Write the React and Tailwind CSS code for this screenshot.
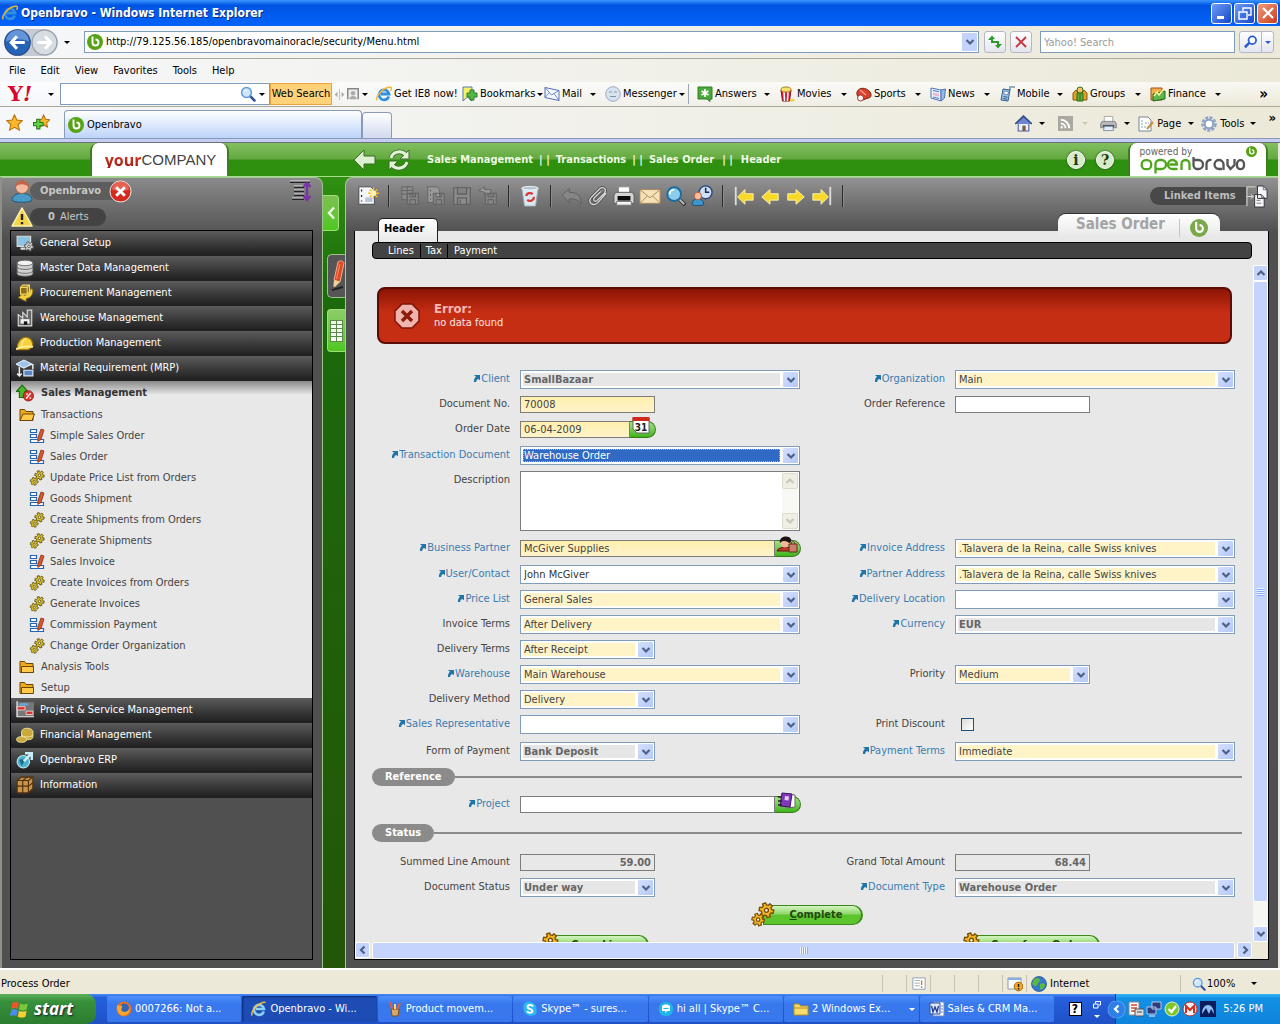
import { clsx } from 'clsx';

/* ---------- small shared pieces ---------- */

function Icon({ size = 16, box = 16, children, className }) {
  return (
    <svg width={size} height={size} viewBox={`0 0 ${box} ${box}`} className={clsx("shrink-0", className)} aria-hidden="true">
      {children}
    </svg>
  );
}

function Caret({ className }) {
  return (
    <svg width="6" height="3" viewBox="0 0 6 3" className={clsx("shrink-0", className)} aria-hidden="true">
      <path d="M0 0h6L3 3z" fill="currentColor" />
    </svg>
  );
}

function Chevron({ dir = 'down', className = 'text-[#4d6185]' }) {
  const paths = {
    down: 'M1.5 3l3.5 3.5L8.5 3',
    up: 'M1.5 7L5 3.500L8.5 7',
    left: 'M6.500 1.5L3 5l3.500 3.500',
    right: 'M3.500 1.5L7 5l-3.500 3.500',
  };
  return (
    <svg width="10" height="10" viewBox="0 0 10 10" className={className} aria-hidden="true">
      <path d={paths[dir]} fill="none" stroke="currentColor" strokeWidth="2.2" />
    </svg>
  );
}

const BravoIcon = ({ size = 16, color = '#57a314' }) => (
  <Icon size={size}>
    <circle cx="8" cy="8" r="8" fill={color} />
    <path d="M5.500 2.500V8.500a3 3 0 1 0 3-3" fill="none" stroke="#fff" strokeWidth="1.900" />
  </Icon>
);

const IeIcon = ({ size = 16 }) => (
  <Icon size={size}>
    <path d="M12.800 10.500A5 5 0 1 1 13 8H5" fill="none" stroke="#2f8fe0" strokeWidth="2.800" />
    <path d="M1.200 14.500C-1 11 7 1 14.500 1.200c1.500.5.8 2.500 0 3.500" fill="none" stroke="#f2b632" strokeWidth="1.400" />
  </Icon>
);

const Magnifier = ({ size = 16 }) => (
  <Icon size={size}>
    <path d="M9.500 9.500l5 5" stroke="#3c4f9a" strokeWidth="2.500" strokeLinecap="round" />
    <circle cx="6.500" cy="6.500" r="4.900" fill="#cfe6fb" stroke="#5c9ae0" strokeWidth="1.500" />
    <path d="M4 6a3 3 0 0 1 2.500-2" stroke="#fff" fill="none" />
  </Icon>
);

const Envelope = () => (
  <Icon>
    <g fill="none" stroke="#5470b8">
      <path d="M1 1.500l14 3v10L1 11.500z" fill="#f4f8ff" />
      <path d="M1 1.500l6.500 7.500L15 4.500M1 11.500l4.500-5M15 14.500l-5-7" strokeWidth=".8" />
    </g>
  </Icon>
);

const Printer = ({ size = 18 }) => (
  <Icon size={size} box={24}>
    <path d="M6 10V2h12v8" fill="#fff" stroke="#8d8d8d" />
    <path d="M3 9h18l2 3v6H1v-6z" fill="#b9b9bd" stroke="#666" />
    <path d="M4 14h16v3H4z" fill="#555" />
    <path d="M6 16h12l1 6H5z" fill="#e4eefc" stroke="#5c7498" />
  </Icon>
);

/* outline of a gear wheel with six rounded teeth */
function gearPath(cx, cy, r) {
  const pts = [];
  for (let i = 0; i < 6; i++) {
    [[-0.3, 1], [-0.24, 1.4], [0.24, 1.4], [0.3, 1]].forEach(([da, k]) => {
      const a = (i * Math.PI) / 3 + da + 0.2;
      pts.push(`${(cx + Math.cos(a) * r * k).toFixed(2)} ${(cy + Math.sin(a) * r * k).toFixed(2)}`);
    });
  }
  return `M${pts.join('L')}z`;
}

const Gear = ({ cx, cy, r, fill, stroke }) => (
  <g stroke={stroke} strokeWidth={r * 0.25} strokeLinejoin="round">
    <path d={gearPath(cx, cy, r)} fill={fill} />
    <circle cx={cx} cy={cy} r={r * 0.38} fill="#f4f0dc" />
  </g>
);

const Gears = ({ size = 16, fill = '#d8c02c', stroke = '#5a4a08', className }) => (
  <Icon size={size} className={className}>
    <Gear cx={10.5} cy={5.3} r={3.4} fill={fill} stroke={stroke} />
    <Gear cx={5.2} cy={11.3} r={2.9} fill={fill} stroke={stroke} />
  </Icon>
);

const FormIcon = () => (
  <Icon>
    <g fill="#fff" stroke="#2464b4" strokeWidth="1.200">
      <path d="M1.500 1.500h6v3h-6zM1.500 6.500h6v3h-6zM1.500 11.500h13v3h-13z" />
    </g>
    <path d="M12 1l3 1-3 9.500-3.200 2v-3.500z" fill="#d9552c" stroke="#8c3216" strokeWidth=".8" />
  </Icon>
);

const Folder = ({ open }) => (
  <Icon>
    <path d="M1 13.500v-11h4.500l1.500 2h7v9z" fill="#f0a81c" stroke="#6b4706" />
    <path d={open ? 'M1 13.500l3-6.500h11.500l-2.500 6.500z' : 'M2.500 13.500V7.500h12v6z'} fill="#ffc94a" stroke="#6b4706" />
  </Icon>
);

/* ---------- browser chrome ---------- */

function TitleBar() {
  const box = "flex h-[21px] w-[21px] items-center justify-center rounded-[3px] border border-white";
  return (
    <header className="flex h-[26px] shrink-0 items-center bg-linear-to-b from-[#3a95ff] via-[#0054e3] via-20% to-[#0463fb] px-[2px]">
      <IeIcon />
      <h1 className="ml-[3px] flex-1 font-['DejaVu_Sans_Condensed','DejaVu_Sans',sans-serif] text-[12px] font-bold text-white [text-shadow:1px_1px_#0a2f8a]">Openbravo - Windows Internet Explorer</h1>
      <div className="flex gap-[2px]">
        <button aria-label="Minimize" className={clsx(box, "bg-linear-to-br from-[#6f9bf5] to-[#1546c8]")}>
          <Icon><path d="M3 11h7v3H3z" fill="#fff" /></Icon>
        </button>
        <button aria-label="Restore" className={clsx(box, "bg-linear-to-br from-[#6f9bf5] to-[#1546c8]")}>
          <Icon><path d="M6 6V3h8v7h-3M2 7h8v7H2z" fill="none" stroke="#fff" strokeWidth="1.400" /></Icon>
        </button>
        <button aria-label="Close" className={clsx(box, "bg-linear-to-br from-[#f09a7c] to-[#c93a12]")}>
          <Icon><path d="M3 3l10 10M13 3L3 13" stroke="#fff" strokeWidth="2.200" /></Icon>
        </button>
      </div>
    </header>
  );
}

function AddressBar() {
  const btn = "flex h-[22px] items-center justify-center rounded-[3px] border border-[#b5b8c4] bg-linear-to-b from-white to-[#e3e6ee]";
  return (
    <div className="flex h-[33px] shrink-0 items-center border-b border-[#aca899] bg-linear-to-r from-[#f6f7fa] to-[#ece9d8] pr-[6px] pl-[4px]">
      <div className="flex rounded-full bg-[#c6cad2]">
        <button aria-label="Back">
          <Icon size={27} box={26}>
            <circle cx="13" cy="13" r="12.300" fill="#2563b8" stroke="#274a80" />
            <path d="M2 12a11 11 0 0 1 22 0c-6-3-16-3-22 0z" fill="#8db8ec" opacity=".6" />
            <path d="M12.500 7L7 13l5.500 6M7.500 13H20" fill="none" stroke="#fff" strokeWidth="3" />
          </Icon>
        </button>
        <button aria-label="Forward">
          <Icon size={27} box={26}>
            <circle cx="13" cy="13" r="12" fill="#d7dbe2" stroke="#8d97a6" />
            <path d="M13.500 7l5.500 6-5.500 6M18.500 13H6" fill="none" stroke="#fff" strokeWidth="3" />
          </Icon>
        </button>
      </div>
      <Caret className="mx-[6px]" />
      <div className="ml-[8px] flex h-[22px] flex-1 items-center border border-[#7f9db9] bg-white pr-px pl-[2px]">
        <BravoIcon />
        <input aria-label="Address" className="ml-[3px] min-w-0 flex-1 outline-none" defaultValue="http://79.125.56.185/openbravomainoracle/security/Menu.html" />
        <button aria-label="Show addresses" className="flex h-[18px] w-[15px] items-center justify-center bg-[#c3d3fb]"><Chevron /></button>
      </div>
      <button aria-label="Refresh" className={clsx(btn, "ml-[5px] w-[22px]")}>
        <Icon><path d="M1 6l4-4.500L8 5H6v2h2v2H4V6zM15 10l-4 4.500L8 11h2V9H8V7h4v3z" fill="#2f9a2c" /></Icon>
      </button>
      <button aria-label="Stop" className={clsx(btn, "ml-[4px] w-[22px]")}>
        <Icon><path d="M3 3l10 10M13 3L3 13" stroke="#c8323c" strokeWidth="1.800" /></Icon>
      </button>
      <input aria-label="Search" placeholder="Yahoo! Search" className="ml-[8px] h-[22px] w-[195px] border border-[#7f9db9] bg-white px-[3px] placeholder:text-[#9a9a9a]" />
      <div className={clsx(btn, "ml-[4px] w-[35px]")}>
        <button aria-label="Search the web" className="flex flex-1 justify-center">
          <Icon size={14}><circle cx="9.500" cy="6" r="4.300" fill="#fff" stroke="#2a5bd0" strokeWidth="2" /><path d="M6 9l-5 5" stroke="#2a5bd0" strokeWidth="3" /></Icon>
        </button>
        <button aria-label="Search options" className="flex h-full w-[12px] items-center justify-center border-l border-[#b5b8c4]"><Caret className="text-[#2a5bd0]" /></button>
      </div>
    </div>
  );
}

const yahooLinks = [
  { label: 'Get IE8 now!', width: 'w-[86px]', icon: <IeIcon />, plain: true },
  { label: 'Bookmarks', width: 'w-[82px]', icon: <Icon><path d="M1 1h9v14l-4.500-4L1 15z" fill="#f7ef6a" stroke="#4e7fae" /><path d="M8 4h4v3h3v4h-3v3H8v-3H5V7h3z" fill="#54b848" stroke="#2a7a22" /></Icon>, tight: true },
  { label: 'Mail', width: 'w-[61px]', icon: <Envelope /> },
  { label: 'Messenger', width: 'w-[83px]', icon: <Icon><circle cx="8" cy="8" r="7.300" fill="#d9e3ef" stroke="#9aacc2" /><path d="M4 6h3M9 6h3M5 10.500h6" stroke="#8193aa" /></Icon>, tight: true },
  { label: 'Answers', width: 'w-[82px]', icon: <Icon><path d="M1 1h14v12h-2v2.500L10 13H1z" fill="#4aa83a" stroke="#2f7f24" /><path d="M8 3v8M4.500 5l7 4M11.500 5l-7 4" stroke="#fff" strokeWidth="1.700" /></Icon>, divided: true },
  { label: 'Movies', width: 'w-[77px]', icon: <Icon><path d="M2 4h10l-1.500 11h-7z" fill="#d8273c" stroke="#7a1020" /><path d="M5 5l.5 10M9 5l-.5 10" stroke="#fff" strokeWidth="1.500" /><ellipse cx="7" cy="3.500" rx="5" ry="2.500" fill="#f7df6a" stroke="#a3811c" /><path d="M11 13h4.500v2.500H11z" fill="#f0d24a" /></Icon> },
  { label: 'Sports', width: 'w-[74px]', icon: <Icon><path d="M1 6c2-5 9-5 13 0 2 3 1 6-2 6l-5 2C4 13 0 10 1 6z" fill="#d8402e" stroke="#7c1c12" /><path d="M4 4l6 5" stroke="#f7a090" strokeWidth="1.500" /><circle cx="4.500" cy="12" r="3" fill="#fff" stroke="#a33" /></Icon> },
  { label: 'News', width: 'w-[69px]', icon: <Icon><path d="M1 2l10 2v11L1 12z" fill="#eaf2ff" stroke="#4b74b4" /><path d="M11 4l4.500-1-1 9-3.500 3z" fill="#9bb8e8" stroke="#4b74b4" /><path d="M3 4.500l6 1.200M3 11l6 1.500" stroke="#4b74b4" /><path d="M3 6.500l6 1.200v3L3 9z" fill="#f0b4cc" /></Icon> },
  { label: 'Mobile', width: 'w-[73px]', icon: <Icon><path d="M4 3l7 1-2 11-7-1z" fill="#9fc0e8" stroke="#35608f" /><path d="M5.500 5l4 .7-.8 3-4-.7z" fill="#fff" stroke="#35608f" strokeWidth=".6" /><path d="M4.500 10.500l4 .7M4 12.500l4 .7M11 4V0M13 2V0M15 2V0" stroke="#35608f" /></Icon> },
  { label: 'Groups', width: 'w-[78px]', icon: <Icon><path d="M1 14V7l3-3 2 3v7z" fill="#e5a02a" stroke="#8a5a0c" /><path d="M10 14V7l2-3 3 3v7z" fill="#e5a02a" stroke="#8a5a0c" /><path d="M5 15V7h6v8z" fill="#62ad3c" stroke="#2f6d18" /><circle cx="8" cy="4" r="3" fill="#f4c468" stroke="#2f6d18" /><path d="M8 8v7" stroke="#2f6d18" /></Icon> },
  { label: 'Finance', width: 'w-[80px]', icon: <Icon><path d="M1 2h11v12H1z" fill="#f3b04a" stroke="#a14c12" /><path d="M3 8l12-3v8L3 15z" fill="#5cb84a" stroke="#206b1c" /><path d="M4 10l3-4 2 3 4-5" fill="none" stroke="#fff2a0" strokeWidth="1.500" /></Icon> },
];

function MenuAndYahoo() {
  return (
    <div className="shrink-0 border-b border-[#aca899] bg-linear-to-r from-[#f6f7fa] to-[#ece9d8]">
      <nav className="flex h-[23px] items-center gap-[15px] pl-[9px]">
        {['File', 'Edit', 'View', 'Favorites', 'Tools', 'Help'].map((m) => <button key={m}>{m}</button>)}
      </nav>
      <div className="flex h-[24px] items-center bg-linear-to-b from-white/70 to-transparent">
        <div className="w-[40px] pl-[8px] font-['DejaVu_Serif'] text-[21px] leading-[22px] font-bold text-[#d8042c]">Y<i>!</i></div>
        <Caret className="mr-[6px] ml-[8px]" />
        <div className="flex h-[22px] w-[210px] items-center border border-[#7f9db9] bg-white">
          <input aria-label="Yahoo search" className="min-w-0 flex-1 outline-none" />
          <Magnifier />
          <Caret className="mr-[4px] ml-[3px]" />
        </div>
        <button className="h-[22px] w-[62px] border border-[#e8a33d] bg-[#ffd27a] whitespace-nowrap">Web Search</button>
        <Icon size={11} className="mx-[2px]"><path d="M8 0v16" stroke="#aaa" /><path d="M5 4L1 8l4 4zM11 4l4 4-4 4z" fill="#aaa" /></Icon>
        <Icon size={12}><path d="M1 15V1h14v14" fill="#eee" stroke="#888" strokeWidth="2" /><circle cx="8" cy="7" r="3" fill="#aaa" /><path d="M3 15c0-6 10-6 10 0z" fill="#aaa" /></Icon>
        <Caret className="mr-[8px] ml-[3px]" />
        {yahooLinks.map((l) => (
          <div key={l.label} className="flex items-center">
            {l.divided && <span className="mr-[8px] h-[20px] w-px bg-[#9aa7b4]" />}
            <button className={clsx("flex items-center gap-[2px] whitespace-nowrap", l.width, l.tight ? "pr-[4px]" : "pr-[9px]")}>
              {l.icon}
              <span className="flex-1 text-left">{l.label}</span>
              {!l.plain && <Caret />}
            </button>
          </div>
        ))}
        <button aria-label="More" className="ml-auto pr-[12px] text-[15px] font-bold">»</button>
      </div>
    </div>
  );
}

function TabStrip() {
  return (
    <div className="flex h-[36px] shrink-0 flex-col border-b border-[#6d6f78] bg-[#c5cdf5]">
      <div className="flex h-[32px] items-end border-b border-[#8a9bb8] bg-linear-to-r from-[#f6f7fa] to-[#ece9d8] pr-[4px] pl-[6px]">
        <button aria-label="Favorites" className="mb-[7px]">
          <Icon size={17}><path d="M8 .8l2.200 4.900 5.200.6-3.900 3.600 1.100 5.300L8 12.500l-4.600 2.700 1.100-5.300L.6 6.300l5.200-.6z" fill="#fbb829" stroke="#b5700c" /></Icon>
        </button>
        <button aria-label="Add to favorites" className="mb-[7px] ml-[10px]">
          <Icon size={17}>
            <path d="M10 1l1.800 4 4 .5-3 2.800.8 4L10 10.300l-3.600 2 .8-4-3-2.800 4-.5z" fill="#fbb829" stroke="#b5700c" />
            <path d="M3.500 5h3v3h3v3h-3v3h-3v-3h-3V8h3z" fill="#6bd04a" stroke="#20801c" />
          </Icon>
        </button>
        <div className="ml-[14px] flex h-[28px] w-[298px] items-center gap-[3px] rounded-t-[4px] border border-b-0 border-[#8a9bb8] bg-linear-to-b from-white to-[#bcd3fa] pl-[3px]">
          <BravoIcon />Openbravo
        </div>
        <button aria-label="New tab" className="h-[26px] w-[30px] rounded-t-[4px] border border-b-0 border-[#8a9bb8] bg-linear-to-b from-white to-[#d2d9ee]" />
        <div className="mb-[6px] ml-auto flex items-center">
          <Icon size={17}><path d="M3 8h10v7H3z" fill="#e8eefc" stroke="#4a5fa5" /><path d="M0 8.500L8 1l8 7.500" fill="#6d86cf" stroke="#36488e" strokeWidth="1.500" /><path d="M7 10h3v5H7z" fill="#7a5a3a" /></Icon>
          <Caret className="mr-[13px] ml-[7px]" />
          <Icon size={15}><path d="M0 0h16v16H0z" fill="#a9a9a0" /><path d="M3 4a9 9 0 0 1 9 9M3 8a5 5 0 0 1 5 5" fill="none" stroke="#fff" strokeWidth="2" /><circle cx="4" cy="12" r="1.300" fill="#fff" /></Icon>
          <Caret className="mr-[12px] ml-[9px] text-[#c9c6b8]" />
          <Printer size={17} />
          <Caret className="mr-[8px] ml-[7px]" />
          <Icon><path d="M1 1h9l3 3v11H1z" fill="#fff" stroke="#7a8494" /><path d="M3 5h3M3 8h2M3 11h5M7 7h4" stroke="#8ca4c8" strokeDasharray="2 1" /><path d="M15 6l-6 7" stroke="#c09040" strokeWidth="2" /></Icon>
          <button className="ml-[3px] flex items-center gap-[7px]">Page<Caret /></button>
          <Icon className="ml-[7px]"><circle cx="8" cy="8" r="6" fill="none" stroke="#8ea6c4" strokeWidth="3.500" strokeDasharray="2.800 1.200" /><circle cx="8" cy="8" r="4.200" fill="#fff" stroke="#8ea6c4" strokeWidth="2" /></Icon>
          <button className="ml-[3px] flex items-center gap-[6px]">Tools<Caret /></button>
          <button aria-label="More tools" className="ml-[12px] self-start text-[13px] leading-[6px] font-bold">»</button>
        </div>
      </div>
    </div>
  );
}

/* ---------- application ---------- */

function RoundBadge({ char, label }) {
  return (
    <button aria-label={label} className="flex h-[18px] w-[18px] items-center justify-center rounded-full border border-white bg-[#d6ecc8] font-['DejaVu_Serif'] text-[14px] leading-none font-bold text-[#1e3a10] shadow-[0_0_2px_#143f05]">
      {char}
    </button>
  );
}

function AppHeader() {
  return (
    <div className="flex h-[34px] shrink-0 items-center border-b border-[#a6dc8c] bg-linear-to-b from-[#83c060] via-[#62a83e] via-49% to-[#2f9010] to-51% pr-[10px] pl-[90px]">
      <div className="flex h-full w-[139px] items-center justify-center rounded-t-[8px] rounded-b-[2px] border-x-2 border-[#3f7d24] bg-white pl-[2px] font-['Open_Sans'] text-[17px] leading-none text-[#444]">
        <b className="bg-linear-to-b from-[#e0402c] to-[#a01408] bg-clip-text text-[16px] text-transparent">your</b>
        <span className="font-['Liberation_Sans'] text-[15px]">COMPANY</span>
      </div>
      <button aria-label="Back" className="ml-[124px]">
        <Icon size={24} box={24}><path d="M1 12L11 2v6h11v8H11v6z" fill="#dcefd0" stroke="#3c6a28" /></Icon>
      </button>
      <button aria-label="Reload" className="ml-[10px]">
        <Icon size={24} box={24}>
          <g fill="none" stroke="#3c6a28" strokeWidth="4.600"><path d="M4 10c2-7 11-8 15-3M20 14c-2 7-11 8-15 3" /></g>
          <path d="M22 2v9h-9zM2 22v-9h9z" fill="#e0f2d6" stroke="#3c6a28" />
          <g fill="none" stroke="#e0f2d6" strokeWidth="3"><path d="M4 10c2-7 11-8 15-3M20 14c-2 7-11 8-15 3" /></g>
        </Icon>
      </button>
      <div className="ml-[16px] flex font-bold whitespace-pre text-[#eefae4]">
        <span>Sales Management</span><span className="mx-[6px]">| |</span>
        <span>Transactions</span><span className="mx-[6px]">| |</span>
        <span>Sales Order</span><span className="mx-[8px]">| |</span>
        <span>Header</span>
      </div>
      <div className="ml-auto flex gap-[11px]"><RoundBadge char="i" label="About" /><RoundBadge char="?" label="Help" /></div>
      <div className="ml-[14px] flex h-full w-[140px] items-start justify-center rounded-t-[8px] border-x-2 border-[#3f7d24] bg-white pt-[3px]">
        <div className="flex flex-col text-[#666]">
          <span className="text-[10px] leading-[11px]">powered by</span>
          <svg width="106" height="17" viewBox="0 0 105 17" role="img" aria-label="openbravo" fill="none" strokeWidth="2.300">
            <g stroke="#4ea61c">
              <rect x="1.200" y="3.200" width="9.500" height="9" rx="4" />
              <path d="M15 16.500V7a4 4 0 0 1 4-4h2a4 4 0 0 1 0 9h-5" />
              <path d="M37 12h-5a4.500 4.500 0 1 1 4.500-4.500H29" />
              <path d="M41 13V7a4 4 0 0 1 8 0v6" />
            </g>
            <g stroke="#555">
              <path d="M53 0v8a4 4 0 0 0 4 4h1a4.500 4.500 0 0 0 0-9h-4" />
              <path d="M66 13V7a4 4 0 0 1 5-4" />
              <path d="M83 13V7a4.500 4.500 0 1 0-4.500 5h3" />
              <path d="M87 2v6l3 4 4-4V2" />
              <rect x="96.500" y="3.200" width="7" height="9" rx="3.500" />
            </g>
          </svg>
        </div>
        <BravoIcon size={11} />
      </div>
    </div>
  );
}

const topModules = [
  { label: 'General Setup', icon: <><path d="M1 2h12v9H1z" fill="#8cc4e4" stroke="#ddd" /><path d="M4 13h5" stroke="#ddd" strokeWidth="2" /><Gear cx={11.5} cy={11} r={3} fill="#ccc" stroke="#555" /></> },
  { label: 'Master Data Management', icon: <g fill="#d0d0d0" stroke="#666" strokeWidth=".8"><path d="M1 3v10c0 3 14 3 14 0V3" /><ellipse cx="8" cy="3.500" rx="7" ry="2.500" fill="#f2f2f2" /><path d="M1 7c0 3 14 3 14 0M1 10.500c0 3 14 3 14 0" fill="none" /></g> },
  { label: 'Procurement Management', icon: <><path d="M13 4l2 1c0 5-2 7-6 8v2.500L2 12l5-4v2c3 0 5-2 6-6z" fill="#f4cf3a" stroke="#8a6a0c" strokeWidth=".7" /><path d="M4 3l2-2h6v6l-2 2H4z" fill="#8a6c1c" stroke="#f0d868" /><path d="M4 3h6v6M10 3l2-2" fill="none" stroke="#f0d868" /></> },
  { label: 'Warehouse Management', icon: <><path d="M2 15V5l4 3V3l0 0h0l4 4V1h4v14z" fill="#666" stroke="#ddd" /><path d="M4 9h8v4H4z" fill="#eee" /><path d="M7 11h3v3H7z" fill="#111" /></> },
  { label: 'Production Management', icon: <><path d="M1 13C1 7 5 2 10 3c4 1 5 5 5 8l-4 3H1z" fill="#f8cf3c" stroke="#9a7410" /><path d="M5 12c0-4 2-7 4-8" fill="none" stroke="#fff09a" /><path d="M0 13.500c5-3 10-3 15-2" fill="none" stroke="#fff09a" strokeWidth="1.500" /></> },
  { label: 'Material Requirement (MRP)', icon: <><path d="M0 4.500l7-3.500 7 3.500-7 3.500z" fill="#9ec4ee" stroke="#dce9f8" /><path d="M3 7v8M1 13l2 2 2-2M12 5h3v4" fill="none" stroke="#eee" strokeWidth="1.300" /><path d="M7 10h8v5H7z" fill="#5d86c4" stroke="#dce9f8" /></> },
];

const bottomModules = [
  { label: 'Project & Service Management', icon: <><path d="M0 1h16v13H0z" fill="#777" /><path d="M1 0v14h15" fill="none" stroke="#eee" /><path d="M1 5h7v3H1zM9 9h6v3H9z" fill="#e03030" stroke="#fff" strokeWidth=".6" /><path d="M3 2h8v2H3z" fill="#6ba8dc" /></> },
  { label: 'Financial Management', icon: <g fill="#c9a93c" stroke="#f3e3a0" strokeWidth=".8"><ellipse cx="10" cy="5" rx="5" ry="3" /><path d="M5 5v5c0 3 10 3 10 0V5" /><path d="M5 7.500c0 3 10 3 10 0" fill="none" /><ellipse cx="5" cy="12" rx="4.500" ry="2.500" /></g> },
  { label: 'Openbravo ERP', icon: <><circle cx="6.500" cy="9.500" r="5.500" fill="#4ab0cc" stroke="#bfe8f4" /><path d="M3 8l3-1 1 3-2 3" fill="#1d6a84" /><path d="M7 9l6-6M8 2h6v6" fill="none" stroke="#c9f0fa" strokeWidth="2.200" /></> },
  { label: 'Information', icon: <g fill="#c99348" stroke="#4e2f0c"><path d="M1 4l4-3h10v10l-4 4H1z" /><path d="M1 4h10v11M11 4l4-3M6 4v11M1 9h10M11 9l4-3M6 4l4-3" fill="none" /></g> },
];

const orderItems = [
  ['Simple Sales Order', 'form'],
  ['Sales Order', 'form'],
  ['Update Price List from Orders', 'process'],
  ['Goods Shipment', 'form'],
  ['Create Shipments from Orders', 'process'],
  ['Generate Shipments', 'process'],
  ['Sales Invoice', 'form'],
  ['Create Invoices from Orders', 'process'],
  ['Generate Invoices', 'process'],
  ['Commission Payment', 'form'],
  ['Change Order Organization', 'process'],
];

function Module({ label, icon }) {
  return (
    <a href="#module" className="flex h-[25px] items-center gap-[6px] border-b border-[#222] bg-linear-to-b from-[#5c5c5c] to-[#202020] pl-[5px] text-white">
      <Icon size={18}>{icon}</Icon>{label}
    </a>
  );
}

function Sidebar() {
  return (
    <aside className="flex w-[323px] shrink-0 flex-col rounded-tr-[8px] border-t border-r border-l-2 border-t-[#a8c79a] border-r-[#9cc48a] border-l-[#8f9088] bg-linear-to-b from-[#8a8a8a] to-[#505050] to-[60px] pr-[9px] pb-[8px] pl-[8px]">
      <div className="flex h-[26px] items-center">
        <Icon size={24} box={24}>
          <path d="M2 21c0-9 20-9 20 0 0 3-20 3-20 0z" fill="#4a9ac8" stroke="#1e5778" />
          <circle cx="12" cy="8" r="6.500" fill="#f2bba0" stroke="#a8644a" />
          <path d="M5.500 8C5 0 19 0 18.500 8c-3-3-9-4-13 0z" fill="#c2644c" />
        </Icon>
        <span className="-ml-[4px] flex h-[18px] w-[84px] items-center rounded-l-full bg-[#5d5d5d] pl-[10px] font-bold text-[#c6c6c6]">Openbravo</span>
        <button aria-label="Log out" className="-ml-[5px]">
          <Icon size={23} box={24}>
            <circle cx="12" cy="12" r="11" fill="#d22a1e" stroke="#eee" />
            <path d="M3 10a9 9 0 0 1 18 0c-5 2-13 2-18 0z" fill="#f08a78" opacity=".6" />
            <path d="M7.500 7.500l9 9M16.500 7.500l-9 9" stroke="#fff" strokeWidth="3" />
          </Icon>
        </button>
        <button aria-label="Expand menu" className="ml-auto">
          <Icon size={24} box={24}>
            <path d="M1 3h20M5 8h10M5 12h10M5 16h10M3 20h12" stroke="#222" strokeWidth="2" />
            <path d="M1 2h20M5 7h10M5 11h10M5 15h10M3 19h12" stroke="#e5e5e5" />
            <path d="M18 5v15M14.500 8L18 4l3.500 4M14.500 17l3.500 4 3.500-4" fill="none" stroke="#7a32a8" strokeWidth="2.400" />
          </Icon>
        </button>
      </div>
      <div className="flex h-[26px] items-center">
        <Icon size={24} box={24}>
          <path d="M12 3l10 18H2z" fill="#f6d648" stroke="#fff3b0" strokeWidth="1.500" strokeLinejoin="round" />
          <path d="M12 9v6M12 17v2.200" stroke="#222" strokeWidth="2.400" />
        </Icon>
        <span className="-ml-[4px] flex h-[18px] w-[76px] items-center gap-[5px] rounded-full bg-[#434343] pl-[18px] text-[#c6c6c6]"><b>0</b>Alerts</span>
      </div>
      <nav className="min-h-0 flex-1 overflow-hidden border border-black bg-[#505050]">
        {topModules.map((m) => <Module key={m.label} {...m} />)}
        <div className="bg-[#e8e8e8] text-[#444]">
          <a href="#sales" className="flex h-[23px] items-center gap-[7px] bg-linear-to-b from-[#8a8a8a] to-[#e8e8e8] to-60% pl-[5px] font-bold text-[#333]">
            <Icon size={18}>
              <path d="M5.500 1l5 5.500H8V12H3V6.500H.5z" fill="#4ab82c" stroke="#1e6a10" />
              <circle cx="11" cy="10.500" r="4.600" fill="#d8342c" stroke="#8a1812" strokeWidth=".7" />
              <path d="M9 13l4-5M9 9h1.500M12 12.500h1.500" stroke="#fff" strokeWidth="1.200" />
            </Icon>
            Sales Management
          </a>
          <a href="#transactions" className="flex h-[21px] items-center gap-[6px] pl-[8px]"><Folder open />Transactions</a>
          {orderItems.map(([label, kind]) => (
            <a key={label} href="#item" className="flex h-[21px] items-center gap-[5px] pl-[18px]">
              {kind === 'form' ? <FormIcon /> : <Gears />}{label}
            </a>
          ))}
          <a href="#analysis" className="flex h-[21px] items-center gap-[6px] pl-[8px]"><Folder />Analysis Tools</a>
          <a href="#setup" className="flex h-[21px] items-center gap-[6px] pl-[8px]"><Folder />Setup</a>
        </div>
        {bottomModules.map((m) => <Module key={m.label} {...m} />)}
      </nav>
    </aside>
  );
}

function GreenStrip() {
  return (
    <div className="flex w-[22px] shrink-0 flex-col bg-linear-to-b from-[#2f9010] via-[#1b6a0c] via-15% to-[#235608]">
      <button aria-label="Hide menu" className="mt-[18px] flex h-[36px] w-[16px] items-center justify-center rounded-r-[4px] border border-l-0 border-[#a4dc80] bg-linear-to-b from-[#7cc052] to-[#4cc81c]">
        <svg width="10" height="14" viewBox="0 0 10 14" aria-hidden="true"><path d="M8 1.500L3 7l5 5.500" fill="none" stroke="#eef8e4" strokeWidth="2.500" /></svg>
      </button>
      <button aria-label="Edit view" className="mt-[23px] ml-[4px] flex h-[44px] w-[18px] items-center justify-center rounded-l-[5px] border border-r-0 border-[#9cc48a] bg-[#555]">
        <svg width="16" height="34" viewBox="0 0 16 34" aria-hidden="true">
          <path d="M3 31l11-3" stroke="#222" strokeWidth="2" />
          <path d="M9 3c1-2 6-1 6 1l-4 19-6-2z" fill="#dc4a22" stroke="#f0b090" />
          <path d="M5 21l6 2-7 7z" fill="#f0d09a" />
          <path d="M4.500 27.500l1.500.5-2 2z" fill="#222" />
          <path d="M11 5L7.500 20" stroke="#f69070" />
        </svg>
      </button>
      <button aria-label="Grid view" className="mt-[11px] ml-[4px] flex h-[43px] w-[18px] items-center justify-center rounded-l-[4px] border border-r-0 border-[#a4dc80] bg-linear-to-b from-[#8ccc68] to-[#4cc81c]">
        <svg width="13" height="22" viewBox="0 0 13 22" aria-hidden="true">
          <path d="M0 0h13v22H0z" fill="#5a8a48" />
          <path d="M1 1h5v3H1zM7 1h5v3H7zM1 5h5v3H1zM7 5h5v3H7zM1 9h5v3H1zM7 9h5v3H7zM1 13h5v3H1zM7 13h5v3H7zM1 17h5v4H1zM7 17h5v4H7z" fill="#f4fbee" />
        </svg>
      </button>
    </div>
  );
}

const disk = <path d="M9 9h12v12H9zM12 9v4h6V9M12 21v-5h6v5" fill="#858585" stroke="#5e5e5e" />;
const yellow = { fill: '#f8d828', stroke: '#fff4b0' };

const toolGroups = [
  [
    ['New', <><path d="M2 2h13l4 4v15H2z" fill="#f4f6fa" stroke="#444" /><path d="M5 5v13" stroke="#333" strokeWidth="1.500" strokeDasharray="2 4" /><path d="M9 16h8" stroke="#b8c4d8" strokeWidth="5" /><path d="M18 3v12M12 9h12M14 5l8 8M22 5l-8 8" stroke="#f8b838" strokeWidth="1.500" /><circle cx="18" cy="9" r="3" fill="#fff4a8" /></>],
  ],
  [
    ['Save and grid', <><path d="M3 2h12v14H3zM3 6h12M3 10h12M9 2v14" fill="#8a8a8a" stroke="#626262" />{disk}</>],
    ['Save and new', <><path d="M3 2h10l3 3v14H3z" fill="#999" stroke="#626262" /><path d="M6 5v11" stroke="#555" strokeDasharray="2 3" />{disk}</>],
    ['Save', <path d="M3 3h18v18H3zM7 3v7h10V3M7 21v-7h10v7M10 16v4" fill="#8c8c8c" stroke="#5e5e5e" strokeWidth="1.300" />],
    ['Save and next', <><path d="M2 6l6-4v3h7v5H8V8z" fill="#999" stroke="#626262" />{disk}</>],
  ],
  [
    ['Delete', <><path d="M3 3h18l-3 20H6z" fill="#dce8f0" stroke="#98a8b4" /><ellipse cx="12" cy="3.500" rx="9" ry="2" fill="#b4c4d0" stroke="#f4f8fa" /><path d="M8 12a4 3.500 0 0 1 7-2M16 13a4 3.500 0 0 1-7 3" fill="none" stroke="#d83a3a" strokeWidth="2.500" /></>],
  ],
  [
    ['Undo', <path d="M1 11l8-7v4c9 0 13 4 13 13-3-5-6-6-13-6v4z" fill="#868686" stroke="#5c5c5c" />],
    ['Attach', <><path d="M21 9l-9 10c-6 5-12 0-7-6L14 4c4-3 8 1 5 5l-8 8c-3 2-5-1-3-3l7-7" fill="none" stroke="#444" strokeWidth="3" /><path d="M21 9l-9 10c-6 5-12 0-7-6L14 4c4-3 8 1 5 5l-8 8c-3 2-5-1-3-3l7-7" fill="none" stroke="#d8d8d8" strokeWidth="1.500" /></>],
    ['Print', <><path d="M6 9V2h12v7" fill="#fff" stroke="#888" /><path d="M3 8h18l2 3v9H1v-9z" fill="#d4d4d4" stroke="#555" /><path d="M5 12h14v5H5z" fill="#0c0c0c" /><path d="M4 18h16v4H4z" fill="#f4f4f4" stroke="#777" /></>],
    ['Email', <><path d="M1 5h22v15H1z" fill="#f6e2b8" stroke="#a8865a" /><path d="M1 5l11 9 11-9M1 20l8-8M23 20l-8-8" fill="none" stroke="#a8865a" /></>],
    ['Search', <><path d="M15 15l7 7" stroke="#333" strokeWidth="4" /><path d="M15 15l6 6" stroke="#bbb" strokeWidth="2" /><circle cx="10" cy="10" r="7.500" fill="#8cccec" stroke="#1e6ca0" strokeWidth="2.200" /><path d="M5 10a5 5 0 0 1 5-5" fill="none" stroke="#fff" strokeWidth="2" /></>],
    ['Audit trail', <><circle cx="16" cy="8" r="7" fill="#cfe0f6" stroke="#27467e" strokeWidth="1.500" /><path d="M16 3v5h4" fill="none" stroke="#1a2a50" strokeWidth="1.700" /><path d="M1 21c0-8 13-8 13 0 0 2-13 2-13 0z" fill="#3f94c8" stroke="#164a70" /><circle cx="7.500" cy="12" r="4" fill="#f4c0a4" stroke="#b05c3c" /></>],
  ],
  [
    ['First', <><path d="M3 2v20" stroke="#ddd" strokeWidth="2" /><path d="M5 13l8-8v4.500h9v7h-9V21z" {...yellow} /></>],
    ['Previous', <path d="M3 13l9-8v4.500h9v7h-9V21z" {...yellow} />],
    ['Next', <path d="M21 13l-9-8v4.500H3v7h9V21z" {...yellow} />],
    ['Last', <><path d="M21 2v20" stroke="#ddd" strokeWidth="2" /><path d="M19 13l-8-8v4.500H2v7h9V21z" {...yellow} /></>],
  ],
];

function Toolbar() {
  return (
    <div className="flex h-[36px] items-center pl-[9px]">
      {toolGroups.map((group, i) => (
        <div key={i} className="flex items-center">
          {group.map(([name, drawing]) => (
            <button key={name} aria-label={name} className="flex w-[26px] justify-center">
              <Icon size={22} box={24}>{drawing}</Icon>
            </button>
          ))}
          <span className="mx-[7px] h-[22px] w-[2px] border-r border-[#8c8c8c] bg-[#2a2a2a]" />
        </div>
      ))}
      <a href="#linked" className="ml-auto flex h-[18px] w-[96px] items-center rounded-l-full bg-[#484848] pl-[14px] font-bold whitespace-nowrap text-[#bdbdbd]">Linked Items</a>
      <Icon size={23} box={24} className="mr-[9px]">
        <path d="M1 22V2h9M1 12h6M5 10l3 2-3 2" stroke="#ddd" fill="none" />
        <path d="M12 1h6l4 4v9H12zM9 10h7l3 3v10H9z" fill="#f4f6fa" stroke="#333" />
        <path d="M18 1v4h4M16 10v3h3M11 16h4M11 19h5" stroke="#555" fill="none" strokeWidth=".8" />
      </Icon>
    </div>
  );
}

/* ---------- form controls ---------- */

const tones = {
  required: 'bg-[#fff3c8] text-[#444]',
  plain: 'bg-white text-[#333]',
  readonly: 'bg-[#e6e6e6] font-bold text-[#666]',
  active: 'bg-[#316ac5] text-white outline-1 -outline-offset-1 outline-dotted outline-[#d8b060]',
};

function Select({ id, value = '', tone = 'required', short }) {
  return (
    <div className={clsx("mt-[4px] flex h-[19px] items-center border border-[#7f9db9] bg-white p-[2px] pr-px", short ? "w-[135px]" : "w-full")}>
      <select id={id} className={clsx("mr-[3px] h-[13px] min-w-0 flex-1 appearance-none pl-px leading-[13px]", tones[tone])}>
        <option>{value}</option>
      </select>
      <span className="flex h-[15px] w-[15px] items-center justify-center rounded-[1px] bg-linear-to-br from-[#d4e0fd] to-[#b4c8f6]"><Chevron /></span>
    </div>
  );
}

function TextBox({ id, value = '', tone = 'plain', width = 'w-[135px]' }) {
  return (
    <input
      id={id}
      defaultValue={value}
      className={clsx(
        "mt-[5px] block h-[17px] shrink-0 border border-[#7c7c7c] px-[3px] leading-[15px]",
        width,
        tone === 'required' && "bg-linear-to-b from-[#ffefae] to-[#fff3c8] text-[#444]",
        tone === 'plain' && "bg-white",
        tone === 'amount' && "bg-[#e8e8e8] text-right font-bold text-[#666]",
      )}
    />
  );
}

/* text box with a green lookup button on its right end */
function LookupBox({ id, value, tone, label, width, icon }) {
  return (
    <div className="flex">
      <TextBox id={id} value={value} tone={tone} width={width} />
      <button aria-label={label} className="relative mt-[5px] h-[17px] w-[26px] shrink-0 rounded-r-full border border-l-0 border-[#3c7a1c] bg-linear-to-b from-[#a4e084] to-[#3cb414]">
        <span className="absolute -top-[5px] left-px">{icon}</span>
      </button>
    </div>
  );
}

function Label({ id, text, link }) {
  return (
    <label htmlFor={id} className={clsx("flex h-[25px] items-center justify-end gap-px whitespace-nowrap", link ? "text-[#3a7cb0]" : "text-[#444]")}>
      {link && <Icon size={7} box={8}><path d="M1 0h7v6L6 4.500C4 5 4 6.500 3.500 8H1c0-3 1-5 2.500-6z" fill="#1f75a8" /></Icon>}
      {text}
    </label>
  );
}

const calendarIcon = (
  <svg width="20" height="18" viewBox="0 0 20 18" aria-hidden="true">
    <path d="M2 1h16v15H6l-4-4z" fill="#fff" stroke="#666" />
    <path d="M1.500 0h17v4h-17z" fill="#cc2a1c" />
    <text x="10" y="14" textAnchor="middle" fontSize="10" fontWeight="bold" fontFamily="DejaVu Sans Condensed" fill="#222">31</text>
  </svg>
);

const partnerIcon = (
  <svg width="22" height="18" viewBox="0 0 22 18" aria-hidden="true">
    <path d="M1 15c1-5 16-5 17 0z" fill="#c23a2a" stroke="#5c140c" />
    <circle cx="9" cy="7" r="4.500" fill="#f0b898" />
    <path d="M4 7C2 1 12-2 15 3c1 3-1 4-2 4-2-2-6-3-9 0z" fill="#1c1410" />
    <path d="M13 8h8v8h-8z" fill="#c8806c" stroke="#6c2418" /><path d="M15 8c0-3 4-3 4 0" fill="none" stroke="#6c2418" />
  </svg>
);

const projectIcon = (
  <svg width="22" height="18" viewBox="0 0 22 18" aria-hidden="true">
    <path d="M10 2l9 1v12l-9 1z" fill="#fff" stroke="#666" />
    <path d="M6 1l10 1-2 13-10-1z" fill="#8038b8" stroke="#3c1460" />
    <path d="M9 4l4 .5-.5 4-4-.5z" fill="#e4ccf4" />
    <path d="M2 5h4M2 9h4M2 13h4" stroke="#222" strokeWidth="1.500" />
  </svg>
);

const orderRows = [
  { h: 'h-[25px]', left: { text: 'Client', link: true, el: Select, value: 'SmallBazaar', tone: 'readonly' }, right: { text: 'Organization', link: true, el: Select, value: 'Main' } },
  { h: 'h-[25px]', left: { text: 'Document No.', el: TextBox, value: '70008', tone: 'required' }, right: { text: 'Order Reference', el: TextBox } },
  { h: 'h-[26px]', left: { text: 'Order Date', el: LookupBox, value: '06-04-2009', tone: 'required', label: 'Pick a date', width: 'w-[110px]', icon: calendarIcon } },
  { h: 'h-[25px]', left: { text: 'Transaction Document', link: true, el: Select, value: 'Warehouse Order', tone: 'active' } },
  { h: 'h-[68px]', left: { text: 'Description', el: Description } },
  { h: 'h-[26px]', left: { text: 'Business Partner', link: true, el: LookupBox, value: 'McGiver Supplies', tone: 'required', label: 'Find a partner', width: 'w-[255px]', icon: partnerIcon }, right: { text: 'Invoice Address', link: true, el: Select, value: '.Talavera de la Reina, calle Swiss knives' } },
  { h: 'h-[25px]', left: { text: 'User/Contact', link: true, el: Select, value: 'John McGiver', tone: 'plain' }, right: { text: 'Partner Address', link: true, el: Select, value: '.Talavera de la Reina, calle Swiss knives' } },
  { h: 'h-[25px]', left: { text: 'Price List', link: true, el: Select, value: 'General Sales' }, right: { text: 'Delivery Location', link: true, el: Select, tone: 'plain' } },
  { h: 'h-[25px]', left: { text: 'Invoice Terms', el: Select, value: 'After Delivery' }, right: { text: 'Currency', link: true, el: Select, value: 'EUR', tone: 'readonly' } },
  { h: 'h-[25px]', left: { text: 'Delivery Terms', el: Select, value: 'After Receipt', short: true } },
  { h: 'h-[25px]', left: { text: 'Warehouse', link: true, el: Select, value: 'Main Warehouse' }, right: { text: 'Priority', el: Select, value: 'Medium', short: true } },
  { h: 'h-[25px]', left: { text: 'Delivery Method', el: Select, value: 'Delivery', short: true } },
  { h: 'h-[27px]', left: { text: 'Sales Representative', link: true, el: Select, tone: 'plain' }, right: { text: 'Print Discount', el: CheckBox } },
  { h: 'h-[25px]', left: { text: 'Form of Payment', el: Select, value: 'Bank Deposit', tone: 'readonly', short: true }, right: { text: 'Payment Terms', link: true, el: Select, value: 'Immediate' } },
];

const referenceRows = [
  { h: 'h-[25px]', left: { text: 'Project', link: true, el: LookupBox, label: 'Find a project', width: 'w-[255px]', icon: projectIcon } },
];

const statusRows = [
  { h: 'h-[25px]', left: { text: 'Summed Line Amount', el: TextBox, value: '59.00', tone: 'amount' }, right: { text: 'Grand Total Amount', el: TextBox, value: '68.44', tone: 'amount' } },
  { h: 'h-[25px]', left: { text: 'Document Status', el: Select, value: 'Under way', tone: 'readonly', short: true }, right: { text: 'Document Type', link: true, el: Select, value: 'Warehouse Order', tone: 'readonly' } },
];

function Description({ id }) {
  return (
    <div className="mt-[4px] flex h-[60px] border border-[#7c7c7c] bg-white p-px">
      <textarea id={id} className="min-w-0 flex-1 resize-none outline-none" />
      <div className="flex w-[16px] flex-col justify-between bg-[#f8f8f4]">
        {['up', 'down'].map((d) => (
          <span key={d} className="flex h-[16px] items-center justify-center rounded-[2px] border border-[#dedcd0] bg-[#f0efe6]"><Chevron dir={d} className="text-[#c9c7ba]" /></span>
        ))}
      </div>
    </div>
  );
}

function CheckBox({ id }) {
  return <input id={id} type="checkbox" className="mt-[7px] ml-[6px] block h-[13px] w-[13px] appearance-none border border-[#1c5180] bg-linear-to-br from-[#dcdcd7] to-white" />;
}

function Cell({ field }) {
  if (!field) return <><span /><span /></>;
  const { text, link, el: Control, ...rest } = field;
  const id = text.toLowerCase().replace(/[^a-z]+/g, '-');
  return (
    <>
      <Label id={id} text={text} link={link} />
      <div className="min-w-0"><Control id={id} {...rest} /></div>
    </>
  );
}

function Rows({ rows }) {
  return rows.map((row) => (
    <div key={row.left.text} className={clsx("grid grid-cols-[minmax(0,155fr)_280px_minmax(0,135fr)_280px] gap-x-[10px] pr-[18px]", row.h)}>
      <Cell field={row.left} />
      <Cell field={row.right} />
    </div>
  ));
}

function SectionTitle({ children, className }) {
  return (
    <div className={clsx("flex h-[18px] items-center pr-[11px] pl-[17px]", className)}>
      <h3 className="flex h-[18px] items-center rounded-full bg-[#8b8b8b] px-[13px] font-bold text-white">{children}</h3>
      <span className="h-[2px] flex-1 bg-[#8b8b8b]" />
    </div>
  );
}

function ActionButton({ children, width }) {
  return (
    <button className={clsx("flex h-[25px] items-center font-bold text-[#1e4a0c]", width)}>
      <Gears size={25} fill="#f2b822" stroke="#7a4c08" className="relative" />
      <span className="-ml-[12px] flex h-[20px] flex-1 items-center justify-center rounded-r-full border border-r-2 border-[#3c8a1c] bg-linear-to-b from-[#d4f4c0] via-[#8cd868] via-45% to-[#5cc42c] to-50% pl-[8px] whitespace-nowrap">{children}</span>
    </button>
  );
}

function ScrollButton({ dir }) {
  return (
    <button aria-label={`Scroll ${dir}`} className="flex h-[16px] w-[15px] shrink-0 items-center justify-center rounded-[2px] border border-white bg-[#c3d3fb]"><Chevron dir={dir} /></button>
  );
}

function Workspace() {
  return (
    <main className="flex min-w-0 flex-1 flex-col rounded-tl-[8px] border-t border-l border-[#a8c79a] bg-linear-to-b from-[#929292] to-[#505050] to-[54px] pb-[8px]">
      <Toolbar />
      <div className="mt-[17px] mr-[9px] ml-[8px] flex min-h-0 flex-1 flex-col border-r border-b border-l border-black bg-[#e8e8e8]">
        <div className="-mt-[17px] flex h-[28px] shrink-0 items-end pr-[48px] pl-[23px]">
          <h2 className="flex h-[24px] w-[60px] items-center rounded-t-[5px] border border-b-0 border-[#222] bg-linear-to-b from-white to-[#e8e8e8] pb-[4px] pl-[5px] text-[11px] font-bold text-black">Header</h2>
          <div className="mb-[5px] ml-auto flex h-[23px] w-[162px] items-center rounded-t-[8px] bg-linear-to-b from-white to-[#e8e8e8] pb-[4px] pl-[18px] text-[15px] font-bold whitespace-nowrap text-[#a4a4a4] shadow-[0_-1px_#333]">
            Sales Order
            <span className="mt-[8px] mr-[10px] ml-auto h-[18px] w-px bg-[#c4c4c4]" />
            <span className="mt-[8px] mr-[12px]"><BravoIcon size={18} color="#7aa84a" /></span>
          </div>
        </div>
        <nav className="mr-[16px] ml-[17px] flex h-[17px] shrink-0 items-center rounded-[4px] border border-black bg-[#434343] pl-[15px] text-white">
          <a href="#lines" className="pr-[6px]">Lines</a>
          <a href="#tax" className="border-l border-black px-[5px]">Tax</a>
          <a href="#payment" className="border-l border-black px-[6px]">Payment</a>
        </nav>
        <div className="mt-[6px] flex min-h-0 flex-1">
          <form className="min-w-0 flex-1 overflow-hidden">
            <div role="alert" className="mt-[22px] mr-[21px] ml-[22px] flex h-[57px] items-center rounded-[8px] border-2 border-[#5c0c04] bg-linear-to-b from-[#8c1404] to-[#c62e14] to-45% pl-[15px]">
              <Icon size={26} box={26}>
                <path d="M8 1h10l7 7v10l-7 7H8l-7-7V8z" fill="#f0b4ac" stroke="#7c1408" strokeWidth="1.500" />
                <path d="M8 8l10 10M18 8L8 18" stroke="#8c1c10" strokeWidth="3.500" />
              </Icon>
              <div className="ml-[14px]">
                <div className="text-[13px] leading-[15px] font-bold text-[#f8b8b0]">Error:</div>
                <div className="leading-[14px] text-[#fbe4e0]">no data found</div>
              </div>
            </div>
            <div className="mt-[22px]"><Rows rows={orderRows} /></div>
            <SectionTitle className="mt-[5px] mb-[5px]">Reference</SectionTitle>
            <Rows rows={referenceRows} />
            <SectionTitle className="mt-[8px] mb-[7px]">Status</SectionTitle>
            <Rows rows={statusRows} />
            <div className="mt-[3px] flex justify-center pl-[4px]"><ActionButton width="w-[113px]"><span><u>C</u>omplete</span></ActionButton></div>
            <div className="mt-[5px] grid grid-cols-[minmax(0,155fr)_280px_minmax(0,135fr)_280px] gap-x-[10px] pr-[18px]">
              <span />
              <div className="pl-[14px]"><ActionButton width="w-[115px]">Copy Lines</ActionButton></div>
              <span />
              <div><ActionButton width="w-[145px]">Copy from Order</ActionButton></div>
            </div>
          </form>
          <div className="flex w-[15px] shrink-0 flex-col bg-[#f6f6f2]">
            <ScrollButton dir="up" />
            <div className="mb-[24px] flex flex-1 flex-col items-center justify-center gap-px rounded-[2px] border border-white bg-[#c5d4fc]">
              {[0, 1, 2, 3].map((n) => <span key={n} className="h-px w-[7px] bg-[#eef4fe] shadow-[0_1px_#8cb0f8]" />)}
            </div>
            <ScrollButton dir="down" />
          </div>
        </div>
        <div className="flex h-[17px] shrink-0 bg-[#ece9d8] pr-[16px]">
          <ScrollButton dir="left" />
          <div className="mx-[2px] flex flex-1 items-center justify-center gap-px rounded-[2px] border border-white bg-[#c5d4fc]">
            {[0, 1, 2, 3].map((n) => <span key={n} className="h-[7px] w-px bg-[#eef4fe] shadow-[1px_0_#8cb0f8]" />)}
          </div>
          <ScrollButton dir="right" />
        </div>
      </div>
    </main>
  );
}

/* ---------- bottom bars ---------- */

function StatusBar() {
  const pane = "flex h-[17px] items-center justify-center border-l border-[#c5c2b0]";
  return (
    <footer className="flex h-[26px] shrink-0 items-center border-t-2 border-white bg-[#ece9d8] pt-[3px] pl-px">
      Process Order
      <div className="ml-auto flex items-center">
        <span className={clsx(pane, "w-[24px]")} />
        <span className={clsx(pane, "w-[24px]")}><Icon size={14}><path d="M1 1h14v13H1z" fill="#fff" stroke="#8a98ac" /><path d="M3 4h6M3 7h6M3 10h6" stroke="#9aa" /><path d="M11 4v5M11 10.500v2" stroke="#e0702c" strokeWidth="1.500" /></Icon></span>
        <span className={clsx(pane, "w-[24px]")} />
        <span className={clsx(pane, "w-[24px]")} />
        <span className={clsx(pane, "w-[24px]")} />
        <span className={clsx(pane, "w-[24px]")}><Icon><path d="M1 2h13v11H1z" fill="#fff" stroke="#8a98ac" /><path d="M1 2h13v2H1z" fill="#8ab0e0" /><circle cx="11.500" cy="10.500" r="4.300" fill="#f4a82a" stroke="#a4640c" /><path d="M11.500 8v3M11.500 12v1.500" stroke="#222" strokeWidth="1.500" /></Icon></span>
        <span className="flex h-[17px] w-[154px] items-center gap-[3px] border-l border-[#c5c2b0] pl-[4px]">
          <Icon><circle cx="8" cy="8" r="7.500" fill="#3478cc" stroke="#1e4a88" strokeWidth=".7" /><path d="M3 3c3-2 6-1 6 1S6 7 6 9s-3 1-5-1zM9 8c3-2 6 0 5 2s-4 5-5 3z" fill="#5cb840" /></Icon>
          Internet
        </span>
        <button className="flex h-[17px] w-[100px] items-center gap-px border-l border-[#c5c2b0] pl-[11px]">
          <Magnifier size={14} />100%<Caret className="ml-[15px]" />
        </button>
      </div>
    </footer>
  );
}

const tasks = [
  { label: '0007266: Not a...', icon: <><circle cx="8" cy="8" r="7.500" fill="#e8701c" /><circle cx="8.500" cy="7" r="4.500" fill="#3464b8" /><path d="M1 4c2 1 3 0 5 1 1 2-2 3 0 5s6 1 8-3c0 10-14 11-13-3z" fill="#f8a82c" /></> },
  { label: 'Openbravo - Wi...', icon: <><path d="M12.800 10.500A5 5 0 1 1 13 8H5" fill="none" stroke="#8cd0f8" strokeWidth="2.600" /><path d="M1.200 14.500C-1 11 7 1 14.500 1.200" fill="none" stroke="#f2c032" strokeWidth="1.500" /></>, active: true },
  { label: 'Product movem...', icon: <><path d="M4 8h8l-1 7H5z" fill="#d8a868" stroke="#7c4c1c" /><path d="M5 8L3 1M10 8l3-6" stroke="#e85c3c" strokeWidth="2" /><path d="M8 8V3" stroke="#f8e05c" strokeWidth="2" /></> },
  { label: 'Skype™ - sures...', icon: <><path d="M8 1a7 7 0 0 1 6.500 8c1 3-1 6-4.500 5.500A7 7 0 0 1 1.500 7C.5 3 4 0 8 1z" fill="#2cb8f0" /><path d="M11 5.500C10 3.500 5.500 3.500 5.500 6s5 1.500 5 4-5 2-5.500 0" fill="none" stroke="#fff" strokeWidth="1.900" /></> },
  { label: 'hi all | Skype™ C...', icon: <><circle cx="8" cy="8" r="7.300" fill="#20b4e8" /><path d="M4 5c2-2 6-2 8 0v5H9l-1.500 2.500V10H4z" fill="#fff" /><path d="M5.500 7.500h5" stroke="#20b4e8" /></> },
  { label: '2 Windows Ex...', icon: <path d="M1 14V3h5l1.500 2H15v9zM1 7h14" fill="#f8dc6c" stroke="#b8901c" />, caret: true },
  { label: 'Sales & CRM Ma...', icon: <><path d="M4 1h11v14H4z" fill="#fff" stroke="#6888c0" /><path d="M1 2h10v11H1z" fill="#dfe9fa" stroke="#2a4ca0" /><path d="M2.500 5l1.500 6 2-5 2 5 1.500-6" fill="none" stroke="#1c3a90" strokeWidth="1.300" /><path d="M12 5h2M12 8h2M12 11h2" stroke="#6888c0" /></> },
];

function Taskbar() {
  return (
    <div className="flex h-[30px] shrink-0 bg-linear-to-b from-[#4a8cf4] via-[#2560de] via-12% to-[#1f50c4] text-white">
      <button className="mr-[11px] flex w-[96px] items-center gap-[5px] rounded-r-[10px] bg-linear-to-b from-[#5cb058] via-[#38903a] via-25% to-[#2c7c30] pl-[10px] font-['Open_Sans'] text-[17px] font-bold italic [text-shadow:1px_1px_2px_#123]">
        <Icon size={19}>
          <path d="M2 2.500c2-1.500 4-1 5.500 0L6.500 7.500c-2-1-3.500-1-5.500 0z" fill="#e8582c" />
          <path d="M8.500 3c2 1 4 1 6.500 0l-1 5c-2 1-4 1-6.500 0z" fill="#7cc83c" />
          <path d="M1 8.500c2-1 3.500-1 5.500 0l-1 5c-2-1-3.500-1-5.500 0z" fill="#4c8cf0" />
          <path d="M7.500 9c2 1 4 1 6.500 0l-1 5c-2 1-4 1-6.500 0z" fill="#f8d030" />
        </Icon>
        start
      </button>
      <div className="flex min-w-0 flex-1 gap-px py-[2px]">
        {tasks.map((t) => (
          <button key={t.label} className={clsx("flex min-w-0 flex-1 items-center gap-[3px] rounded-[2px] pl-[9px] whitespace-nowrap", t.active ? "bg-[#1c4cb4] shadow-[inset_1px_1px_2px_#0c2c78]" : "bg-linear-to-b from-[#4c90fc] to-[#3878ec] to-30%")}>
            <Icon>{t.icon}</Icon>
            <span className="flex-1 text-left">{t.label}</span>
            {t.caret && <Caret className="mr-[4px]" />}
          </button>
        ))}
      </div>
      <div className="flex w-[61px] items-center justify-center gap-[11px]">
        <span className="flex h-[14px] w-[13px] items-center justify-center border border-black bg-white text-[12px] font-bold text-black">?</span>
        <span className="flex flex-col items-center gap-[6px]">
          <Icon size={8}><path d="M5 5V1h10v7h-4M1 6h9v8H1z" fill="none" stroke="#fff" strokeWidth="2" /></Icon>
          <Caret />
        </span>
      </div>
      <div className="flex w-[165px] items-center gap-[2px] border-l border-[#0c3c9c] bg-linear-to-b from-[#34b4f4] via-[#1290e4] via-15% to-[#0f84dc]">
        <button aria-label="Show hidden icons" className="-ml-[8px] mr-px flex h-[17px] w-[17px] items-center justify-center rounded-full bg-[#2c80e8] shadow-[0_0_1px_#fff]"><Chevron dir="left" className="text-white" /></button>
        <Icon><path d="M1 1h10v13H1z" fill="#fff" stroke="#888" /><path d="M3 4h6M3 7h6M3 10h6" stroke="#d04a2c" strokeWidth="1.500" /><path d="M7 8h9v7H7z" fill="#ddd" stroke="#555" /><path d="M9 11h5" stroke="#444" /></Icon>
        <Icon><path d="M6 1h9v7H6zM1 6h9v7H1z" fill="#2a3c7c" stroke="#b8c8e8" /><path d="M3 15h6" stroke="#b8c8e8" strokeWidth="1.500" /></Icon>
        <Icon><circle cx="8" cy="8" r="7" fill="#7cc82c" stroke="#e4f4d0" /><path d="M4.500 8l3 3 4.500-6" fill="none" stroke="#fff" strokeWidth="2.200" /></Icon>
        <Icon><circle cx="8" cy="8" r="7" fill="#f4f4f4" stroke="#c8241c" /><path d="M4 12V5l4 4 4-4v7" fill="none" stroke="#d42c20" strokeWidth="2" /></Icon>
        <Icon><path d="M0 0h16v16H0z" fill="#0c1c5c" /><path d="M2 13c0-12 12-12 12 0l-3-5-2 5-3-6z" fill="#8cc0f4" /></Icon>
        <time className="ml-auto pr-[17px] whitespace-nowrap">5:26 PM</time>
      </div>
    </div>
  );
}

export default function App() {
  return (
    <div className="flex h-screen flex-col overflow-hidden bg-[#ece9d8] font-['DejaVu_Sans_Condensed','DejaVu_Sans',sans-serif] text-[11px] leading-[14px] text-black">
      <TitleBar />
      <AddressBar />
      <MenuAndYahoo />
      <TabStrip />
      <div className="flex min-h-0 flex-1 flex-col border-r-2 border-[#e8e8e0] bg-[#2f9010]">
        <AppHeader />
        <div className="flex min-h-0 flex-1">
          <Sidebar />
          <GreenStrip />
          <Workspace />
        </div>
      </div>
      <StatusBar />
      <Taskbar />
    </div>
  );
}
